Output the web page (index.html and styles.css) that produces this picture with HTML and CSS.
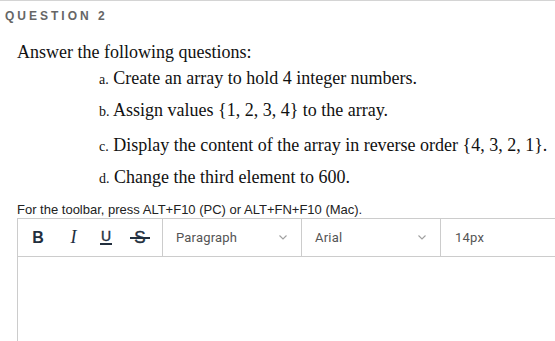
FILE: index.html
```html
<!DOCTYPE html>
<html lang="en">
<head>
    <meta charset="UTF-8">
    <title>Question 2</title>
    <link rel="stylesheet" href="styles.css">
</head>
<body>

<div class="question">
    <div class="question-header">QUESTION 2</div>

    <div class="question-body">
        <p class="prompt">Answer the following questions:</p>
        <ol class="items">
            <li class="item item-a"><span class="marker">a.</span> Create an array to hold 4 integer numbers.</li>
            <li class="item item-b"><span class="marker">b.</span> Assign values {1, 2, 3, 4} to the array.</li>
            <li class="item item-c"><span class="marker">c.</span> Display the content of the array in reverse order {4, 3, 2, 1}.</li>
            <li class="item item-d"><span class="marker">d.</span> Change the third element to 600.</li>
        </ol>
    </div>

    <p class="hint">For the toolbar, press ALT+F10 (PC) or ALT+FN+F10 (Mac).</p>

    <div class="editor">
        <div class="toolbar">
            <div class="tool-group format-group">
                <span class="tool"><span class="tool-bold">B</span></span>
                <span class="tool"><span class="tool-italic">I</span></span>
                <span class="tool"><span class="tool-underline">U</span></span>
                <span class="tool"><span class="tool-strike">S</span></span>
            </div>
            <div class="tool-group select-group">
                <span class="select-label">Paragraph</span>
                <svg class="chevron" width="8" height="5" viewBox="0 0 8 5"><path d="M0.5 0.5l3.5 3.5 3.5-3.5" fill="none" stroke="#a0a0a0" stroke-width="1.1"/></svg>
            </div>
            <div class="tool-group select-group">
                <span class="select-label">Arial</span>
                <svg class="chevron" width="8" height="5" viewBox="0 0 8 5"><path d="M0.5 0.5l3.5 3.5 3.5-3.5" fill="none" stroke="#a0a0a0" stroke-width="1.1"/></svg>
            </div>
            <div class="tool-group size-group">
                <span class="select-label">14px</span>
            </div>
        </div>
        <div class="editor-area"></div>
    </div>
</div>

</body>
</html>
```

FILE: styles.css
```css
body {
    margin: 0;
    padding: 0;
    background-color: #ffffff;
    font-family: "Liberation Sans", Arial, sans-serif;
    overflow: hidden;
}

.question {
    border-top: 1px solid #d4d4d4;
}

.question-header {
    padding: 8px 0 0 5px;
    height: 18px;
    font-size: 12px;
    font-weight: bold;
    letter-spacing: 3px;
    color: #666666;
}

.question-body {
    padding-left: 17px;
    font-family: "Liberation Serif", "Times New Roman", serif;
    color: #111111;
}

.prompt {
    margin: 14px 0 0 0;
    font-size: 18px;
    line-height: 22px;
}

.items {
    list-style: none;
    margin: 0;
    padding: 0 0 0 82px;
    font-size: 18px;
}

.item {
    line-height: 22px;
}

.item-a { margin-top: 4px; }
.item-b { margin-top: 8px; }
.item-c { margin-top: 11px; }
.item-d { margin-top: 8px; }

.marker {
    font-size: 14px;
}

.hint {
    margin: 12px 0 0 17px;
    font-size: 13px;
    line-height: 15px;
    color: #222222;
}

.editor {
    margin-left: 17px;
    margin-top: 1px;
    border-left: 1px solid #cccccc;
    border-top: 1px solid #cccccc;
}

.toolbar {
    display: flex;
    height: 37px;
    border-bottom: 1px solid #cccccc;
}

.tool-group {
    display: flex;
    align-items: center;
    border-right: 1px solid #cccccc;
    box-sizing: border-box;
}

.format-group {
    width: 145px;
    padding-left: 3px;
}

.tool {
    width: 34px;
    display: flex;
    justify-content: center;
    color: #222f3e;
}

.tool-bold {
    font-size: 16px;
    font-weight: bold;
}

.tool-italic {
    font-family: "Liberation Serif", serif;
    font-style: italic;
    font-size: 18px;
    margin-left: 3px;
}

.tool-underline {
    font-size: 14px;
    line-height: 13px;
    -webkit-text-stroke: 0.4px #222f3e;
    border-bottom: 2px solid #222f3e;
    padding: 0 1px;
}

.tool-strike {
    position: relative;
    font-size: 17px;
    -webkit-text-stroke: 0.4px #222f3e;
}

.tool-strike::after {
    content: "";
    position: absolute;
    left: -4px;
    right: -4px;
    top: 9px;
    height: 2px;
    background-color: #222f3e;
}

.select-group {
    width: 139px;
    padding: 0 14px 0 13px;
    justify-content: space-between;
}

.size-group {
    flex: 1;
    padding-left: 14px;
    border-right: none;
}

.select-label {
    font-family: Roboto, "Liberation Sans", sans-serif;
    font-size: 13px;
    letter-spacing: 0.2px;
    color: #555555;
}

.editor-area {
    height: 90px;
}
```
